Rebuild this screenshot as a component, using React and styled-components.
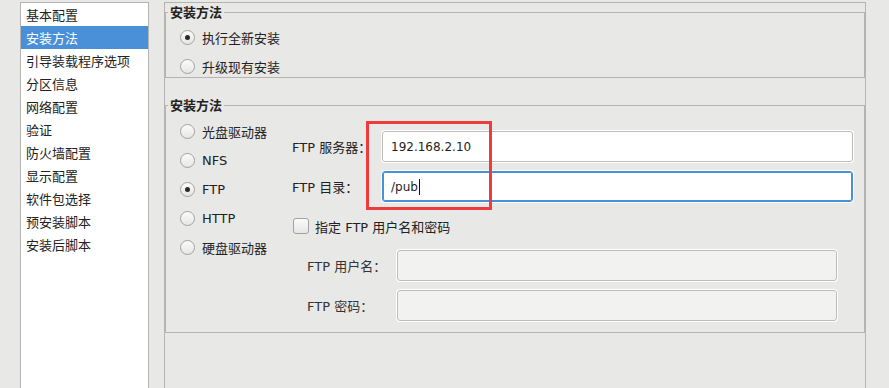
import React from "react";
import styled, { createGlobalStyle, css } from "styled-components";

const Global = createGlobalStyle`
  html, body { margin: 0; padding: 0; }
  body {
    background: #e8e8e7;
    width: 889px;
    height: 388px;
    overflow: hidden;
    font-family: "DejaVu Sans", "Noto Sans CJK SC", sans-serif;
    font-size: 13px;
    color: #222;
  }
`;

const Root = styled.div`
  position: relative;
  display: flex;
  align-items: stretch;
  padding: 2px 0 0 20px;
  height: 388px;
  box-sizing: border-box;
  overflow: hidden;
`;

const NavList = styled.ul`
  list-style: none;
  margin: 0;
  padding: 0;
  width: 129px;
  box-sizing: border-box;
  background: #fff;
  border: 1px solid #b4b4b2;
  border-bottom: none;
  font-family: "Noto Sans CJK SC", sans-serif;
`;

const NavItem = styled.li`
  height: 23px;
  line-height: 23px;
  padding-left: 5px;
  white-space: nowrap;
  ${(p) =>
    p.$selected &&
    css`
      background: #4a90d9;
      color: #fff;
    `}
`;

const Panel = styled.div`
  margin-left: 15px;
  width: 702px;
  box-sizing: border-box;
  border: 1px solid #b4b4b2;
  border-bottom: none;
`;

const Group = styled.fieldset`
  margin: ${(p) => (p.$first ? "0" : "18px 0 0")};
  padding: 0;
  border: 1px solid #b4b4b2;
  min-width: 0;
`;

const Legend = styled.legend`
  margin-left: 2px;
  padding: 0 2px;
  line-height: 18px;
  font-family: "Noto Sans CJK SC", sans-serif;
  font-weight: 700;
  font-size: 13px;
  color: #222;
`;

const RadioColumn = styled.div`
  display: flex;
  flex-direction: column;
  gap: 9px;
  padding: ${(p) => p.$pt || "7px"} 0 ${(p) => p.$pb || "0"} 14px;
  width: ${(p) => p.$width || "auto"};
  box-sizing: border-box;
  flex-shrink: 0;
`;

const RadioRow = styled.label`
  display: flex;
  align-items: center;
  gap: 7px;
  height: 20px;
  white-space: nowrap;
`;

const RadioCircle = styled.span`
  width: 15px;
  height: 15px;
  box-sizing: border-box;
  border-radius: 50%;
  border: 1px solid #a2a2a0;
  background: linear-gradient(#fbfbfb, #e6e6e5);
  display: flex;
  align-items: center;
  justify-content: center;
  flex-shrink: 0;
  &::after {
    content: "";
    display: ${(p) => (p.$checked ? "block" : "none")};
    width: 5px;
    height: 5px;
    border-radius: 50%;
    background: #2a2a2a;
  }
`;

const GroupBody = styled.div`
  display: flex;
  padding-bottom: 11px;
`;

const FormColumn = styled.div`
  flex: 1;
  display: flex;
  flex-direction: column;
  padding: 17px 11px 0 0;
`;

const FieldRow = styled.div`
  display: grid;
  grid-template-columns: 90px 1fr;
  align-items: center;
  margin-top: ${(p) => p.$mt || "0"};
`;

const FieldLabel = styled.span`
  white-space: nowrap;
  color: ${(p) => (p.$muted ? "#333" : "#222")};
`;

const TextBox = styled.div`
  height: 31px;
  box-sizing: border-box;
  border-radius: 3px;
  border: 1px solid #bdbdbb;
  background: #fff;
  box-shadow: 0 0 0 1px #fff;
  display: flex;
  align-items: center;
  padding: 0 8px;
  font-size: 12px;
  color: #1e1e1e;
  ${(p) =>
    p.$focused &&
    css`
      border-color: #4a90d9;
      box-shadow: inset 0 0 0 1px #4a90d9, 0 0 0 1px #fff;
    `}
  ${(p) =>
    p.$disabled &&
    css`
      background: #f2f2f1;
    `}
`;

const Caret = styled.span`
  display: inline-block;
  width: 1px;
  height: 16px;
  background: #111;
  margin-left: 1px;
`;

const CheckRow = styled.label`
  display: flex;
  align-items: center;
  gap: 6px;
  height: 16px;
  margin: 16px 0 0 1px;
  white-space: nowrap;
`;

const CheckBox = styled.span`
  width: 16px;
  height: 16px;
  box-sizing: border-box;
  border: 1px solid #a2a2a0;
  border-radius: 3px;
  background: linear-gradient(#fbfbfb, #e6e6e5);
`;

const SubFields = styled.div`
  display: flex;
  flex-direction: column;
  gap: 9px;
  margin: 16px 16px 0 15px;
`;

const Annotation = styled.div`
  position: absolute;
  left: 366px;
  top: 121px;
  width: 126px;
  height: 89px;
  box-sizing: border-box;
  border: 3px solid #ee3b3b;
  pointer-events: none;
`;

const navItems = [
  "基本配置",
  "安装方法",
  "引导装载程序选项",
  "分区信息",
  "网络配置",
  "验证",
  "防火墙配置",
  "显示配置",
  "软件包选择",
  "预安装脚本",
  "安装后脚本",
];

const sources = [
  { label: "光盘驱动器" },
  { label: "NFS" },
  { label: "FTP", checked: true },
  { label: "HTTP" },
  { label: "硬盘驱动器" },
];

export default function App() {
  return (
    <>
      <Global />
      <Root>
        <NavList>
          {navItems.map((t, i) => (
            <NavItem key={t} $selected={i === 1}>
              {t}
            </NavItem>
          ))}
        </NavList>
        <Panel>
          <Group $first>
            <Legend>安装方法</Legend>
            <RadioColumn $pt="6px" $pb="1px">
              <RadioRow>
                <RadioCircle $checked />
                执行全新安装
              </RadioRow>
              <RadioRow>
                <RadioCircle />
                升级现有安装
              </RadioRow>
            </RadioColumn>
          </Group>
          <Group>
            <Legend>安装方法</Legend>
            <GroupBody>
              <RadioColumn $width="126px">
                {sources.map((s) => (
                  <RadioRow key={s.label}>
                    <RadioCircle $checked={s.checked} />
                    {s.label}
                  </RadioRow>
                ))}
              </RadioColumn>
              <FormColumn>
                <FieldRow>
                  <FieldLabel>FTP 服务器：</FieldLabel>
                  <TextBox>192.168.2.10</TextBox>
                </FieldRow>
                <FieldRow $mt="9px">
                  <FieldLabel>FTP 目录：</FieldLabel>
                  <TextBox $focused>
                    /pub
                    <Caret />
                  </TextBox>
                </FieldRow>
                <CheckRow>
                  <CheckBox />
                  指定 FTP 用户名和密码
                </CheckRow>
                <SubFields>
                  <FieldRow>
                    <FieldLabel $muted>FTP 用户名：</FieldLabel>
                    <TextBox $disabled />
                  </FieldRow>
                  <FieldRow>
                    <FieldLabel $muted>FTP 密码：</FieldLabel>
                    <TextBox $disabled />
                  </FieldRow>
                </SubFields>
              </FormColumn>
            </GroupBody>
          </Group>
        </Panel>
        <Annotation />
      </Root>
    </>
  );
}
